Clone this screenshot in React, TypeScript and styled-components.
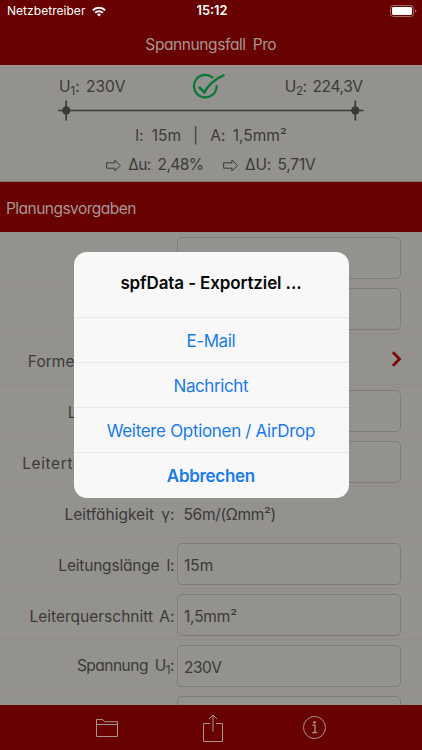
import React from 'react';
import styled, { createGlobalStyle } from 'styled-components';

const red = '#680200';
const gray = '#94928e';
const ink = '#3b3a39';
const pale = '#a79594';

const GlobalStyle = createGlobalStyle`
  * { box-sizing: border-box; }
  body { margin: 0; background: ${gray}; overflow: hidden; }
`;

const Screen = styled.div`
  position: relative;
  width: 422px;
  height: 750px;
  overflow: hidden;
  display: flex;
  flex-direction: column;
  background: ${gray};
  color: ${ink};
  font-family: Inter, 'Open Sans', sans-serif;
  font-feature-settings: 'cv11', 'calt' 0;
  font-size: 15.5px;
  line-height: 20px;
  white-space: pre;
`;

const Text = styled.span<{ $ls?: number; $ws?: number }>`
  letter-spacing: ${(p) => p.$ls ?? 0}px;
  word-spacing: ${(p) => p.$ws ?? 0}px;
  margin-right: ${(p) => -(p.$ls ?? 0)}px;
`;

const Sub = styled.span`
  font-size: 11.5px;
  position: relative;
  top: 3px;
`;

const Header = styled.header`
  flex: none;
  height: 65px;
  background: ${red};
`;

const StatusBar = styled.div`
  height: 22px;
  display: grid;
  grid-template-columns: 1fr auto 1fr;
  align-items: center;
  padding: 0 5px 0 7px;
  color: #fff;
  font-size: 12px;
  font-feature-settings: normal;
`;

const Carrier = styled.div`
  display: flex;
  align-items: center;
  gap: 7px;
`;

const Clock = styled.div`
  font-weight: 600;
  font-size: 12.8px;
`;

const BatterySlot = styled.div`
  display: flex;
  justify-content: flex-end;
`;

const Title = styled.div`
  height: 43px;
  display: flex;
  align-items: center;
  justify-content: center;
  padding-top: 3px;
  color: ${pale};
`;

const Summary = styled.section`
  flex: none;
  height: 117px;
  border-top: 1px solid #a29391;
  border-bottom: 1px solid #8b7370;
`;

const Ends = styled.div`
  height: 34px;
  padding: 6px 59px 0;
  display: flex;
  justify-content: space-between;
`;

const EndValue = styled.div`
  padding-top: 5px;
`;

const CheckSlot = styled.div`
  margin-left: 6px;
  padding-top: 1px;
  height: 28px;
`;

const LineSlot = styled.div`
  height: 21px;
  padding-left: 58px;
`;

const Values = styled.div<{ $gap: number; $top: number }>`
  display: flex;
  justify-content: center;
  align-items: center;
  height: 20px;
  margin-top: ${(p) => p.$top}px;
  gap: ${(p) => p.$gap}px;
`;

const Pair = styled.span`
  display: flex;
  align-items: center;
  gap: 7px;
`;

const Section = styled.h2`
  flex: none;
  margin: 0;
  height: 50px;
  padding: 4px 0 0 6px;
  display: flex;
  align-items: center;
  background: ${red};
  color: ${pale};
  font-size: 15.5px;
  font-weight: 400;
`;

const Form = styled.div`
  flex: 1;
  min-height: 0;
  overflow: hidden;
`;

const Row = styled.div`
  height: 51px;
  display: grid;
  grid-template-columns: 174.5px 1fr;
  column-gap: 2.5px;
  align-items: center;
  padding-right: 21px;
  border-bottom: 1px solid #918c89;
`;

const Label = styled.div<{ $raised?: boolean }>`
  text-align: right;
  padding-top: ${(p) => (p.$raised ? 3 : 5)}px;
`;

const Field = styled.div`
  height: 42px;
  margin-top: 1px;
  border: 1px solid #7d7c7b;
  border-radius: 5px;
  padding: 4px 0 0 6px;
  display: flex;
  align-items: center;
`;

const Plain = styled.div`
  padding: 5px 0 0 6.5px;
`;

const ChevronSlot = styled.div`
  display: flex;
  justify-content: flex-end;
`;

const Toolbar = styled.footer`
  flex: none;
  height: 45px;
  background: ${red};
  display: grid;
  grid-template-columns: 107px 100px 100px;
  align-items: center;
  padding-left: 96px;
`;

const Dialog = styled.div`
  position: absolute;
  left: 73.5px;
  top: 252px;
  width: 275px;
  height: 245.5px;
  border-radius: 13px;
  background: #f8f8f8;
  display: flex;
  flex-direction: column;
  overflow: hidden;
  font-feature-settings: normal;
  font-size: 17px;
`;

const DialogTitle = styled.div`
  height: 65px;
  display: flex;
  align-items: center;
  justify-content: center;
  padding-bottom: 3px;
  color: #0a0a0a;
  font-weight: 600;
`;

const DialogButton = styled.button<{ $bold?: boolean }>`
  flex: 1;
  border: 0;
  border-top: 1px solid #e7e9eb;
  padding: 1px 0 0;
  background: none;
  color: #187bea;
  font: inherit;
  font-weight: ${(p) => (p.$bold ? 600 : 400)};
`;

const Wifi = () => (
  <svg width="14" height="11" viewBox="0 0 14 11" fill="none" stroke="#fff" strokeWidth="2">
    <path d="M.8 4.3a9 9 0 0 1 12.4 0" />
    <path d="M3.2 6.8a5.4 5.4 0 0 1 7.6 0" />
    <path d="M7 10.6 4.9 8.6a3 3 0 0 1 4.2 0z" fill="#fff" stroke="none" />
  </svg>
);

const Battery = () => (
  <svg width="27" height="12" viewBox="0 0 27 12">
    <rect x=".5" y=".5" width="23" height="11" rx="2.8" fill="none" stroke="#a36a69" />
    <rect x="2" y="2" width="20" height="8" rx="1.4" fill="#fff" />
    <path d="M25 4.2q1.5.6 1.5 1.8T25 7.8z" fill="#a36a69" />
  </svg>
);

const Check = () => (
  <svg width="33" height="28" viewBox="0 0 33 28" fill="none" stroke="#087a35" strokeWidth="2.2" strokeLinecap="round">
    <path d="M20.5 4.4A11.3 11.3 0 1 0 24.6 13" />
    <path d="M7.5 14.5 12.4 19.3C15 13.5 23 5.5 31.5 2.4" strokeWidth="2.5" />
  </svg>
);

const Cable = () => (
  <svg width="306" height="21" viewBox="0 0 306 21" stroke={ink} strokeWidth="1.7" fill={ink}>
    <path d="M0 10.5h305.5M8.2 .5v20M297.3.5v20" />
    <circle cx="8.2" cy="10.5" r="3.3" />
    <circle cx="297.3" cy="10.5" r="3.3" />
  </svg>
);

const Arrow = () => (
  <svg width="15" height="13" viewBox="0 0 15 13" fill="none" stroke={ink} strokeWidth="1">
    <path d="M.6 3.8h8.3V1l5.4 5.5L8.9 12V9.2H.6z" />
  </svg>
);

const Chevron = () => (
  <svg width="9" height="16" viewBox="1 0 9 16" fill="none" stroke="#7a0805" strokeWidth="2.7">
    <path d="M1.9 1.2 8.5 8l-6.6 6.8" />
  </svg>
);

const Folder = () => (
  <svg width="22" height="20" viewBox="0 0 22 20" fill="none" stroke={pale} strokeWidth="1">
    <path d="M.5 18.5v-17h6.2l1.6 2.2h13.2v14.8zM.5 6.5h21" />
  </svg>
);

const Share = () => (
  <svg width="20" height="28" viewBox="0 0 20 28" fill="none" stroke={pale} strokeWidth="1">
    <path d="M7 9.5H.5v18h19v-18H13M10 17.5V1M6 5l4-4 4 4" />
  </svg>
);

const Info = () => (
  <svg width="23" height="23" viewBox="0 0 23 23" fill="none" stroke={pale} strokeWidth="1">
    <circle cx="11.5" cy="11.5" r="11" />
    <path d="M9.4 9.2h2.6v7.3M9.2 16.7h5" strokeWidth="1.3" />
    <circle cx="11.5" cy="6.2" r="1.3" fill={pale} stroke="none" />
  </svg>
);

export default function App() {
  return (
    <>
      <GlobalStyle />
      <Screen>
        <Header>
          <StatusBar>
            <Carrier>
              <Text $ls={0.04}>Netzbetreiber</Text>
              <Wifi />
            </Carrier>
            <Clock>15:12</Clock>
            <BatterySlot><Battery /></BatterySlot>
          </StatusBar>
          <Title><Text $ls={-0.4} $ws={3}>Spannungsfall Pro</Text></Title>
        </Header>

        <Summary>
          <Ends>
            <EndValue><Text $ws={2}>U<Sub>1</Sub>: 230V</Text></EndValue>
            <CheckSlot><Check /></CheckSlot>
            <EndValue><Text $ls={-0.4} $ws={2}>U<Sub>2</Sub>: 224,3V</Text></EndValue>
          </Ends>
          <LineSlot><Cable /></LineSlot>
          <Values $gap={12} $top={5}>
            <Text $ws={4}>l: 15m</Text>
            <Text>|</Text>
            <Text $ws={3}>A: 1,5mm²</Text>
          </Values>
          <Values $gap={19} $top={9}>
            <Pair><Arrow /><Text $ls={-0.55} $ws={3}>Δu: 2,48%</Text></Pair>
            <Pair><Arrow /><Text $ls={-0.15} $ws={2}>ΔU: 5,71V</Text></Pair>
          </Values>
        </Summary>

        <Section><Text $ls={-0.53}>Planungsvorgaben</Text></Section>

        <Form>
          <Row><Label /><Field /></Row>
          <Row><Label /><Field /></Row>
          <Row><Label><Text $ls={0.03}>Formelverwendung:</Text></Label><ChevronSlot><Chevron /></ChevronSlot></Row>
          <Row><Label><Text $ls={0.05}>Leitermaterial:</Text></Label><Field /></Row>
          <Row><Label><Text $ls={0.6}>Leitertemperatur ϑ:</Text></Label><Field /></Row>
          <Row><Label><Text $ws={3}>Leitfähigkeit γ:</Text></Label><Plain><Text $ls={-0.3}>56m/(Ωmm²)</Text></Plain></Row>
          <Row><Label><Text $ls={-0.2} $ws={3}>Leitungslänge l:</Text></Label><Field><Text>15m</Text></Field></Row>
          <Row><Label><Text $ws={2}>Leiterquerschnitt A:</Text></Label><Field><Text $ls={-0.2}>1,5mm²</Text></Field></Row>
          <Row><Label $raised><Text $ls={-0.5} $ws={3}>Spannung U<Sub>1</Sub>:</Text></Label><Field><Text $ls={-0.5}>230V</Text></Field></Row>
          <Row><Label /><Field /></Row>
        </Form>

        <Toolbar><Folder /><Share /><Info /></Toolbar>

        <Dialog>
          <DialogTitle><Text $ls={-0.12}>spfData - Exportziel ...</Text></DialogTitle>
          <DialogButton><Text $ls={-0.4}>E-Mail</Text></DialogButton>
          <DialogButton><Text $ls={-0.4}>Nachricht</Text></DialogButton>
          <DialogButton><Text $ls={-0.32}>Weitere Optionen / AirDrop</Text></DialogButton>
          <DialogButton $bold><Text $ls={-0.3}>Abbrechen</Text></DialogButton>
        </Dialog>
      </Screen>
    </>
  );
}
